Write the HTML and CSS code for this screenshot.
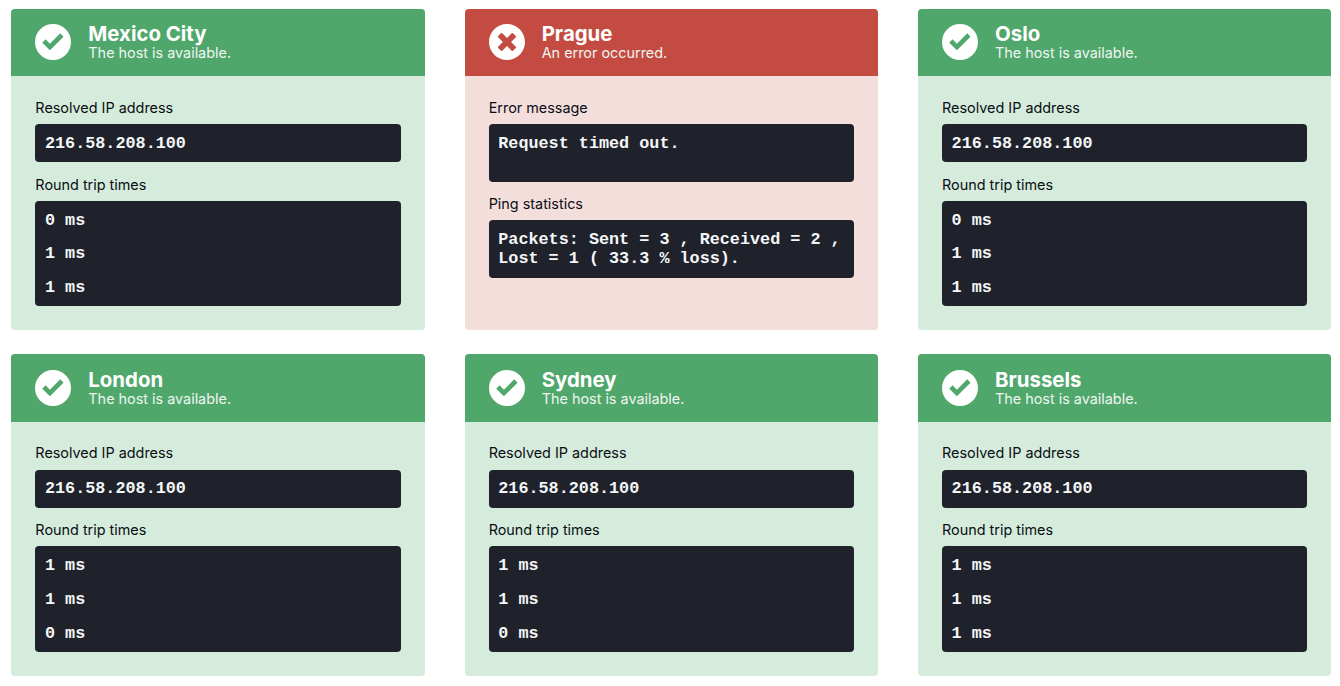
FILE: index.html
```html
<!DOCTYPE html>
<html lang="en">
<head>
<meta charset="utf-8">
<title>Ping results</title>
<link rel="stylesheet" href="styles.css">
</head>
<body>
<main class="grid">
  <section class="card ok">
    <header class="head">
      <svg class="icon" viewBox="0 0 36 36"><path fill-rule="evenodd" d="M18 0a18 18 0 1 0 0 36a18 18 0 1 0 0-36zM10.53 15.37L14.9 19.75L25.27 9.37L28.53 12.63L14.9 26.25L7.27 18.63z"/></svg>
      <div class="titles"><h2 class="city">Mexico City</h2><p class="status">The host is available.</p></div>
    </header>
    <div class="body">
      <h3 class="label">Resolved IP address</h3>
      <div class="term">216.58.208.100</div>
      <h3 class="label">Round trip times</h3>
      <ul class="term list"><li>0 ms</li><li>1 ms</li><li>1 ms</li></ul>
    </div>
  </section>
  <section class="card err">
    <header class="head">
      <svg class="icon" viewBox="8 8 496 496"><path d="M256 8C119 8 8 119 8 256s111 248 248 248 248-111 248-248S393 8 256 8zm121.6 313.1c4.7 4.7 4.7 12.3 0 17L338 377.6c-4.7 4.7-12.3 4.7-17 0L256 312l-65.1 65.6c-4.7 4.7-12.3 4.7-17 0L134.4 338c-4.7-4.7-4.7-12.3 0-17l65.6-65-65.6-65.1c-4.7-4.7-4.7-12.3 0-17l39.6-39.6c4.7-4.7 12.3-4.7 17 0l65 65.7 65.1-65.6c4.7-4.7 12.3-4.7 17 0l39.6 39.6c4.7 4.7 4.7 12.3 0 17L312 256l65.6 65.1z"/></svg>
      <div class="titles"><h2 class="city">Prague</h2><p class="status">An error occurred.</p></div>
    </header>
    <div class="body">
      <h3 class="label">Error message</h3>
      <div class="term two-lines">Request timed out.</div>
      <h3 class="label">Ping statistics</h3>
      <div class="term">Packets: Sent = 3 , Received = 2 , Lost = 1 ( 33.3 % loss).</div>
    </div>
  </section>
  <section class="card ok">
    <header class="head">
      <svg class="icon" viewBox="0 0 36 36"><path fill-rule="evenodd" d="M18 0a18 18 0 1 0 0 36a18 18 0 1 0 0-36zM10.53 15.37L14.9 19.75L25.27 9.37L28.53 12.63L14.9 26.25L7.27 18.63z"/></svg>
      <div class="titles"><h2 class="city">Oslo</h2><p class="status">The host is available.</p></div>
    </header>
    <div class="body">
      <h3 class="label">Resolved IP address</h3>
      <div class="term">216.58.208.100</div>
      <h3 class="label">Round trip times</h3>
      <ul class="term list"><li>0 ms</li><li>1 ms</li><li>1 ms</li></ul>
    </div>
  </section>
  <section class="card ok">
    <header class="head">
      <svg class="icon" viewBox="0 0 36 36"><path fill-rule="evenodd" d="M18 0a18 18 0 1 0 0 36a18 18 0 1 0 0-36zM10.53 15.37L14.9 19.75L25.27 9.37L28.53 12.63L14.9 26.25L7.27 18.63z"/></svg>
      <div class="titles"><h2 class="city">London</h2><p class="status">The host is available.</p></div>
    </header>
    <div class="body">
      <h3 class="label">Resolved IP address</h3>
      <div class="term">216.58.208.100</div>
      <h3 class="label">Round trip times</h3>
      <ul class="term list"><li>1 ms</li><li>1 ms</li><li>0 ms</li></ul>
    </div>
  </section>
  <section class="card ok">
    <header class="head">
      <svg class="icon" viewBox="0 0 36 36"><path fill-rule="evenodd" d="M18 0a18 18 0 1 0 0 36a18 18 0 1 0 0-36zM10.53 15.37L14.9 19.75L25.27 9.37L28.53 12.63L14.9 26.25L7.27 18.63z"/></svg>
      <div class="titles"><h2 class="city">Sydney</h2><p class="status">The host is available.</p></div>
    </header>
    <div class="body">
      <h3 class="label">Resolved IP address</h3>
      <div class="term">216.58.208.100</div>
      <h3 class="label">Round trip times</h3>
      <ul class="term list"><li>1 ms</li><li>1 ms</li><li>0 ms</li></ul>
    </div>
  </section>
  <section class="card ok">
    <header class="head">
      <svg class="icon" viewBox="0 0 36 36"><path fill-rule="evenodd" d="M18 0a18 18 0 1 0 0 36a18 18 0 1 0 0-36zM10.53 15.37L14.9 19.75L25.27 9.37L28.53 12.63L14.9 26.25L7.27 18.63z"/></svg>
      <div class="titles"><h2 class="city">Brussels</h2><p class="status">The host is available.</p></div>
    </header>
    <div class="body">
      <h3 class="label">Resolved IP address</h3>
      <div class="term">216.58.208.100</div>
      <h3 class="label">Round trip times</h3>
      <ul class="term list"><li>1 ms</li><li>1 ms</li><li>1 ms</li></ul>
    </div>
  </section>
</main>
</body>
</html>
```
FILE: styles.css
```css
* { box-sizing: border-box; }
html, body { margin: 0; padding: 0; background: #fff; }
body { font-family: Inter, "Liberation Sans", sans-serif; color: #0b0e14; overflow: hidden; }
.grid {
  display: grid;
  grid-template-columns: repeat(3, 1fr);
  column-gap: 40px;
  row-gap: 24px;
  padding: 8.8px 8.67px 0 11.33px;
}
.card { border-radius: 4px; overflow: hidden; display: flex; flex-direction: column; }
.ok { background: #d5ecdc; }
.err { background: #f4dedc; }
.head {
  display: flex;
  align-items: center;
  gap: 17px;
  padding: 0 24px;
  height: 67.4px;
  color: #fff;
}
.ok .head { background: #4fa76b; }
.err .head { background: #c44b41; }
.icon { width: 36px; height: 36px; fill: #fff; flex: none; }
.titles { min-width: 0; }
.city { margin: 0; font-size: 20.4px; line-height: 22px; font-weight: 700; }
.status { margin: 0; font-size: 14.4px; line-height: 16px; font-weight: 400; color: #f0f5f1; }
.body { padding: 21.65px 24px 24px; }
.label { margin: 0 0 6.2px; font-size: 14.4px; line-height: 20px; font-weight: 400; }
.term {
  background: #1f222a;
  color: #f4f6f8;
  border-radius: 4px;
  font-family: "Liberation Mono", "Courier New", monospace;
  font-weight: 700;
  font-size: 16.8px;
  line-height: 19.2px;
  padding: 9.6px;
  margin: 0 0 12.25px;
  list-style: none;
}
.term:last-child { margin-bottom: 0; }
.two-lines { min-height: 57.6px; }
.list { padding: 2.8px 9.6px 2px; }
.list li { padding: 7.2px 0; }
```
